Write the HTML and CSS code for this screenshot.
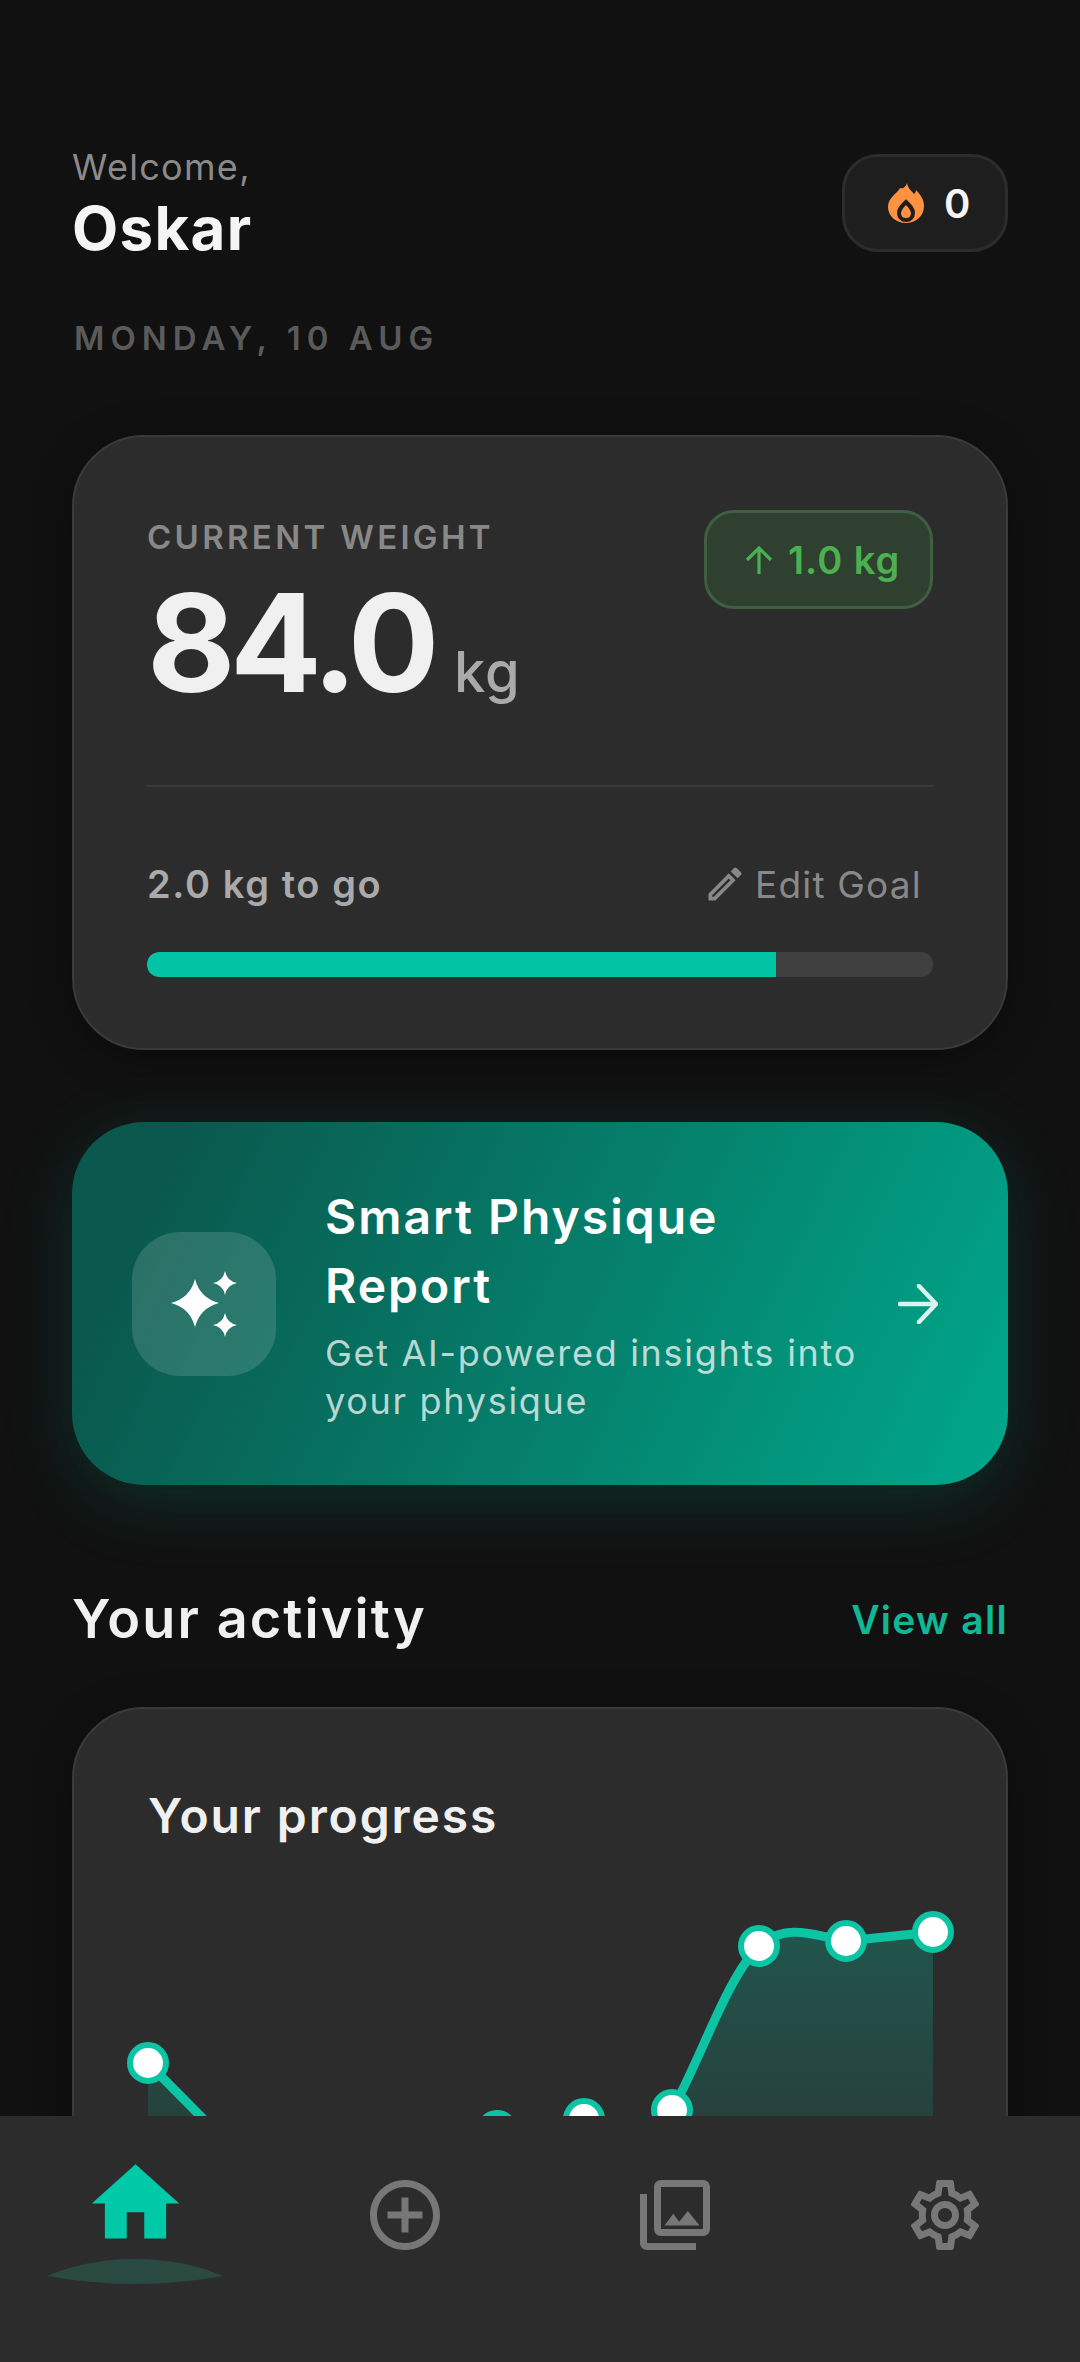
FILE: index.html
```html
<!DOCTYPE html>
<html lang="en">

<head>
    <meta charset="UTF-8">
    <meta name="viewport" content="width=device-width, initial-scale=1.0">
    <title>Home</title>
    <link rel="stylesheet" href="styles.css">
</head>

<body>
    <main class="screen">
        <header class="top">
            <div>
                <div class="welcome">Welcome,</div>
                <div class="name">Oskar</div>
            </div>
            <div class="streak">
                <svg class="flame" viewBox="0 0 36 40">
                    <path fill="#ff9240" d="M19 0c1 6 5 8 7 11 1-1 2-2 2-4 5 5 8 10 8 16 0 10-8 17-18 17S0 33 0 24C0 14 10 10 12 5c3 1 6-1 7-5z" />
                    <path fill="#ff9240" stroke="#1e1e1e" stroke-width="4" d="M18 19c4 4 7 7 7 11 0 4-3 7-7 7s-7-3-7-7c0-4 3-7 7-11z" />
                </svg>
                <span class="streak-num">0</span>
            </div>
        </header>
        <div class="date">MONDAY, 10 AUG</div>

        <section class="card weight">
            <div class="weight-top">
                <div>
                    <div class="label">CURRENT WEIGHT</div>
                    <div class="value">84.0<span class="unit">kg</span></div>
                </div>
                <div class="delta">
                    <svg class="delta-arrow" viewBox="0 0 28 28" fill="none" stroke="#4caf50" stroke-width="3.2">
                        <path d="M14 28V2M2 14 14 2l12 12" />
                    </svg>
                    <span>1.0 kg</span>
                </div>
            </div>
            <div class="divider"></div>
            <div class="goal">
                <span class="togo">2.0 kg to go</span>
                <span class="edit">
                    <svg class="pencil" viewBox="0 0 24 24" fill="#888">
                        <path d="M14.06 9.02l.92.92L5.92 19H5v-.92l9.06-9.06M17.66 3c-.25 0-.51.1-.7.29l-1.83 1.83 3.75 3.75 1.83-1.83c.39-.39.39-1.02 0-1.41l-2.34-2.34c-.2-.2-.45-.29-.71-.29zm-3.6 3.19L3 17.25V21h3.75L17.81 9.94l-3.75-3.75z" />
                    </svg>
                    Edit Goal
                </span>
            </div>
            <div class="bar">
                <div class="bar-fill" style="width: 80%"></div>
            </div>
        </section>

        <section class="report">
            <div class="report-icon">
                <svg width="72" height="72" viewBox="0 0 72 72" fill="#fff">
                    <path d="M27 11Q32 30 51 35 32 40 27 59 22 40 3 35 22 30 27 11Z" />
                    <path d="M57 3Q59 13 69 15 59 17 57 27 55 17 45 15 55 13 57 3Z" />
                    <path d="M57 45Q59 55 69 57 59 59 57 69 55 59 45 57 55 55 57 45Z" />
                </svg>
            </div>
            <div class="report-text">
                <h2>Smart Physique Report</h2>
                <p>Get AI-powered insights into your physique</p>
            </div>
            <svg class="report-arrow" viewBox="0 0 40 40" fill="none" stroke="#d8f5ee" stroke-width="4.5" stroke-linecap="round" stroke-linejoin="round">
                <path d="M2 20h36M21 2l17 18-17 18" />
            </svg>
        </section>

        <div class="section-head">
            <h3>Your activity</h3>
            <span class="view-all">View all</span>
        </div>

        <section class="card progress">
            <div class="progress-title">Your progress</div>
            <svg class="chart" viewBox="0 0 786 300">
                <defs>
                    <linearGradient id="area" x1="0" y1="0" x2="0" y2="1">
                        <stop offset="0" stop-color="#00c9a7" stop-opacity="0.26" />
                        <stop offset="1" stop-color="#00c9a7" stop-opacity="0.08" />
                    </linearGradient>
                </defs>
                <path fill="url(#area)" d="M0 164 87 252 175 280 262 270 349 232C380 250 405 250 436 220 470 250 495 245 524 211 553 160 578 80 611 47 640 22 670 38 698 42L785 33V300H0Z" />
                <path fill="none" stroke="#0cc4a4" stroke-width="9" stroke-linejoin="round" d="M0 164 87 252 175 280 262 270 349 232C380 250 405 250 436 220 470 250 495 245 524 211 553 160 578 80 611 47 640 22 670 38 698 42L785 33" />
                <g fill="#fff" stroke="#0cc4a4" stroke-width="6">
                    <circle cx="0" cy="164" r="18" />
                    <circle cx="349" cy="232" r="18" />
                    <circle cx="436" cy="220" r="18" />
                    <circle cx="524" cy="211" r="18" />
                    <circle cx="611" cy="47" r="18" />
                    <circle cx="698" cy="42" r="18" />
                    <circle cx="785" cy="33" r="18" />
                </g>
            </svg>
        </section>
    </main>

    <nav class="nav">
        <div class="nav-item">
            <svg class="nav-home" viewBox="0 0 24 24" fill="#00c9a7">
                <path d="M10 20v-6h4v6h5v-8h3L12 3 2 12h3v8z" />
            </svg>
            <svg class="nav-glow" viewBox="0 0 176 25" fill="#2a4a41">
                <path d="M0 17Q40 0 88 0T176 17Q130 25 88 25T0 17Z" />
            </svg>
        </div>
        <div class="nav-item">
            <svg class="nav-icon" viewBox="0 0 24 24" fill="#777">
                <path d="M13 7h-2v4H7v2h4v4h2v-4h4v-2h-4V7zm-1-5C6.48 2 2 6.48 2 12s4.48 10 10 10 10-4.48 10-10S17.52 2 12 2zm0 18c-4.41 0-8-3.59-8-8s3.59-8 8-8 8 3.59 8 8-3.59 8-8 8z" />
            </svg>
        </div>
        <div class="nav-item">
            <svg class="nav-icon" viewBox="0 0 24 24" fill="#777">
                <path d="M20 4v12H8V4h12m0-2H8c-1.1 0-2 .9-2 2v12c0 1.1.9 2 2 2h12c1.1 0 2-.9 2-2V4c0-1.1-.9-2-2-2zm-8.5 9.67l1.69 2.26 2.48-3.1L19 15H9zM2 6v14c0 1.1.9 2 2 2h14v-2H4V6H2z" />
            </svg>
        </div>
        <div class="nav-item">
            <svg class="nav-icon" viewBox="0 0 24 24" fill="#777">
                <path d="M19.43 12.98c.04-.32.07-.64.07-.98 0-.34-.03-.66-.07-.98l2.11-1.65c.19-.15.24-.42.12-.64l-2-3.46c-.09-.16-.26-.25-.44-.25-.06 0-.12.01-.17.03l-2.49 1c-.52-.4-1.08-.73-1.69-.98l-.38-2.65C14.46 2.18 14.25 2 14 2h-4c-.25 0-.46.18-.49.42l-.38 2.65c-.61.25-1.17.59-1.69.98l-2.49-1c-.06-.02-.12-.03-.18-.03-.17 0-.34.09-.43.25l-2 3.46c-.13.22-.07.49.12.64l2.11 1.65c-.04.32-.07.65-.07.98 0 .33.03.66.07.98l-2.11 1.65c-.19.15-.24.42-.12.64l2 3.46c.09.16.26.25.44.25.06 0 .12-.01.17-.03l2.49-1c.52.4 1.08.73 1.69.98l.38 2.65c.03.24.24.42.49.42h4c.25 0 .46-.18.49-.42l.38-2.65c.61-.25 1.17-.59 1.69-.98l2.49 1c.06.02.12.03.18.03.17 0 .34-.09.43-.25l2-3.46c.12-.22.07-.49-.12-.64l-2.11-1.65zm-1.98-1.71c.04.31.05.52.05.73 0 .21-.02.43-.05.73l-.14 1.13.89.7 1.08.84-.7 1.21-1.27-.51-1.04-.42-.9.68c-.43.32-.84.56-1.25.73l-1.06.43-.16 1.13-.2 1.35h-1.4l-.19-1.35-.16-1.13-1.06-.43c-.43-.18-.83-.41-1.23-.71l-.91-.7-1.06.43-1.27.51-.7-1.21 1.08-.84.89-.7-.14-1.13c-.03-.31-.05-.54-.05-.74s.02-.43.05-.73l.14-1.13-.89-.7-1.08-.84.7-1.21 1.27.51 1.04.42.9-.68c.43-.32.84-.56 1.25-.73l1.06-.43.16-1.13.2-1.35h1.39l.19 1.35.16 1.13 1.06.43c.43.18.83.41 1.23.71l.91.7 1.06-.43 1.27-.51.7 1.21-1.07.85-.89.7.14 1.13zM12 8c-2.21 0-4 1.79-4 4s1.79 4 4 4 4-1.79 4-4-1.79-4-4-4zm0 6c-1.1 0-2-.9-2-2s.9-2 2-2 2 .9 2 2-.9 2-2 2z" />
            </svg>
        </div>
    </nav>
</body>

</html>
```
FILE: styles.css
```css
* {
    box-sizing: border-box;
}

html,
body {
    margin: 0;
    height: 2362px;
    overflow: hidden;
    background-color: #111;
    font-family: Inter, "Liberation Sans", sans-serif;
}

.screen {
    padding: 141px 72px 0;
}

.top {
    display: flex;
    justify-content: space-between;
    align-items: center;
}

.welcome {
    font-size: 36px;
    line-height: 52px;
    letter-spacing: 1.3px;
    color: #8a8a8a;
}

.name {
    font-size: 60px;
    line-height: 70px;
    font-weight: 700;
    letter-spacing: 1.3px;
    color: #f5f5f5;
}

.streak {
    display: flex;
    align-items: center;
    gap: 20px;
    width: 166px;
    height: 98px;
    margin-top: 2px;
    padding-left: 43px;
    background-color: #1e1e1e;
    border: 3px solid #2c2c2c;
    border-radius: 36px;
}

.flame {
    width: 36px;
    height: 40px;
}

.streak-num {
    font-size: 40px;
    font-weight: 600;
    color: #f5f5f5;
}

.date {
    margin: 55px 0 77px 2px;
    font-size: 33px;
    line-height: 40px;
    font-weight: 600;
    letter-spacing: 6px;
    color: #5a5a5a;
}

.card {
    background-color: #2c2c2c;
    border: 2px solid #3a3a3a;
    border-radius: 72px;
    box-shadow: 0 8px 40px rgba(0, 0, 0, 0.4);
}

.weight {
    padding: 73px 73px 71px;
}

.weight-top {
    display: flex;
    justify-content: space-between;
    align-items: flex-start;
}

.label {
    margin-top: 5px;
    font-size: 33px;
    line-height: 44px;
    font-weight: 600;
    letter-spacing: 3.3px;
    color: #888;
}

.value {
    margin-top: 14px;
    font-size: 136px;
    line-height: 140px;
    font-weight: 700;
    letter-spacing: -5.5px;
    color: #f0f0f0;
}

.unit {
    margin-left: 20px;
    font-size: 56px;
    line-height: 1;
    font-weight: 500;
    letter-spacing: 1px;
    color: #aaa;
}

.delta {
    display: flex;
    align-items: center;
    gap: 15px;
    width: 229px;
    height: 99px;
    padding-left: 38px;
    font-size: 38px;
    font-weight: 600;
    letter-spacing: 1px;
    color: #4caf50;
    background-color: #2f3f30;
    border: 3px solid #3f5f41;
    border-radius: 30px;
}

.delta-arrow {
    width: 28px;
    height: 28px;
    flex: none;
}

.divider {
    height: 2px;
    margin: 72px 0 72px;
    background-color: #3a3a3a;
}

.goal {
    display: flex;
    justify-content: space-between;
    align-items: center;
    height: 50px;
    padding-right: 11px;
}

.togo {
    font-size: 38px;
    font-weight: 600;
    letter-spacing: 1.6px;
    color: #aaa;
}

.edit {
    display: flex;
    align-items: center;
    gap: 8px;
    font-size: 37px;
    letter-spacing: 1.2px;
    color: #888;
}

.pencil {
    width: 44px;
    height: 44px;
}

.bar {
    height: 25px;
    margin-top: 43px;
    background-color: #404040;
    border-radius: 12px;
    overflow: hidden;
}

.bar-fill {
    height: 100%;
    background-color: #00c4a4;
    border-radius: 12px 0 0 12px;
}

.report {
    display: flex;
    align-items: center;
    height: 363px;
    margin-top: 72px;
    padding: 0 70px 0 60px;
    background: linear-gradient(115deg, #0a584d 10%, #00a88c 100%);
    border-radius: 72px;
    box-shadow: 0 16px 70px rgba(0, 170, 140, 0.2);
}

.report-icon {
    display: flex;
    align-items: center;
    justify-content: center;
    flex: none;
    width: 144px;
    height: 144px;
    margin-right: 49px;
    background-color: rgba(255, 255, 255, 0.14);
    border-radius: 48px;
}

.report-text {
    flex: 1;
    width: 0;
}

.report-text h2 {
    width: 460px;
    margin: 0 0 9px;
    font-size: 48px;
    line-height: 69px;
    font-weight: 600;
    letter-spacing: 2px;
    color: #fff;
}

.report-text p {
    width: 540px;
    margin: 0;
    font-size: 36px;
    line-height: 48px;
    letter-spacing: 1.7px;
    color: rgba(255, 255, 255, 0.72);
}

.report-arrow {
    flex: none;
    width: 40px;
    height: 40px;
}

.section-head {
    display: flex;
    justify-content: space-between;
    align-items: center;
    margin: 99px 0 53px;
}

.section-head h3 {
    margin: 0;
    font-size: 54px;
    line-height: 70px;
    font-weight: 600;
    letter-spacing: 2.1px;
    color: #f0f0f0;
}

.view-all {
    font-size: 39px;
    font-weight: 600;
    letter-spacing: 1.3px;
    color: #12b896;
}

.progress {
    padding: 77px 74px 0;
    height: 560px;
}

.progress-title {
    font-size: 48px;
    line-height: 60px;
    font-weight: 600;
    letter-spacing: 1.9px;
    color: #f0f0f0;
}

.chart {
    display: block;
    width: 786px;
    height: 300px;
    margin-top: 53px;
    overflow: visible;
}

.nav {
    position: fixed;
    left: 0;
    right: 0;
    bottom: 0;
    display: grid;
    grid-template-columns: repeat(4, 1fr);
    height: 246px;
    background-color: #2c2c2c;
}

.nav-item {
    position: relative;
    display: flex;
    align-items: center;
    justify-content: center;
    height: 198px;
}

.nav-icon {
    width: 84px;
    height: 84px;
}

.nav-home {
    width: 105px;
    height: 105px;
    margin-bottom: 23px;
}

.nav-glow {
    position: absolute;
    left: 47px;
    top: 143px;
    width: 176px;
    height: 25px;
}
```
